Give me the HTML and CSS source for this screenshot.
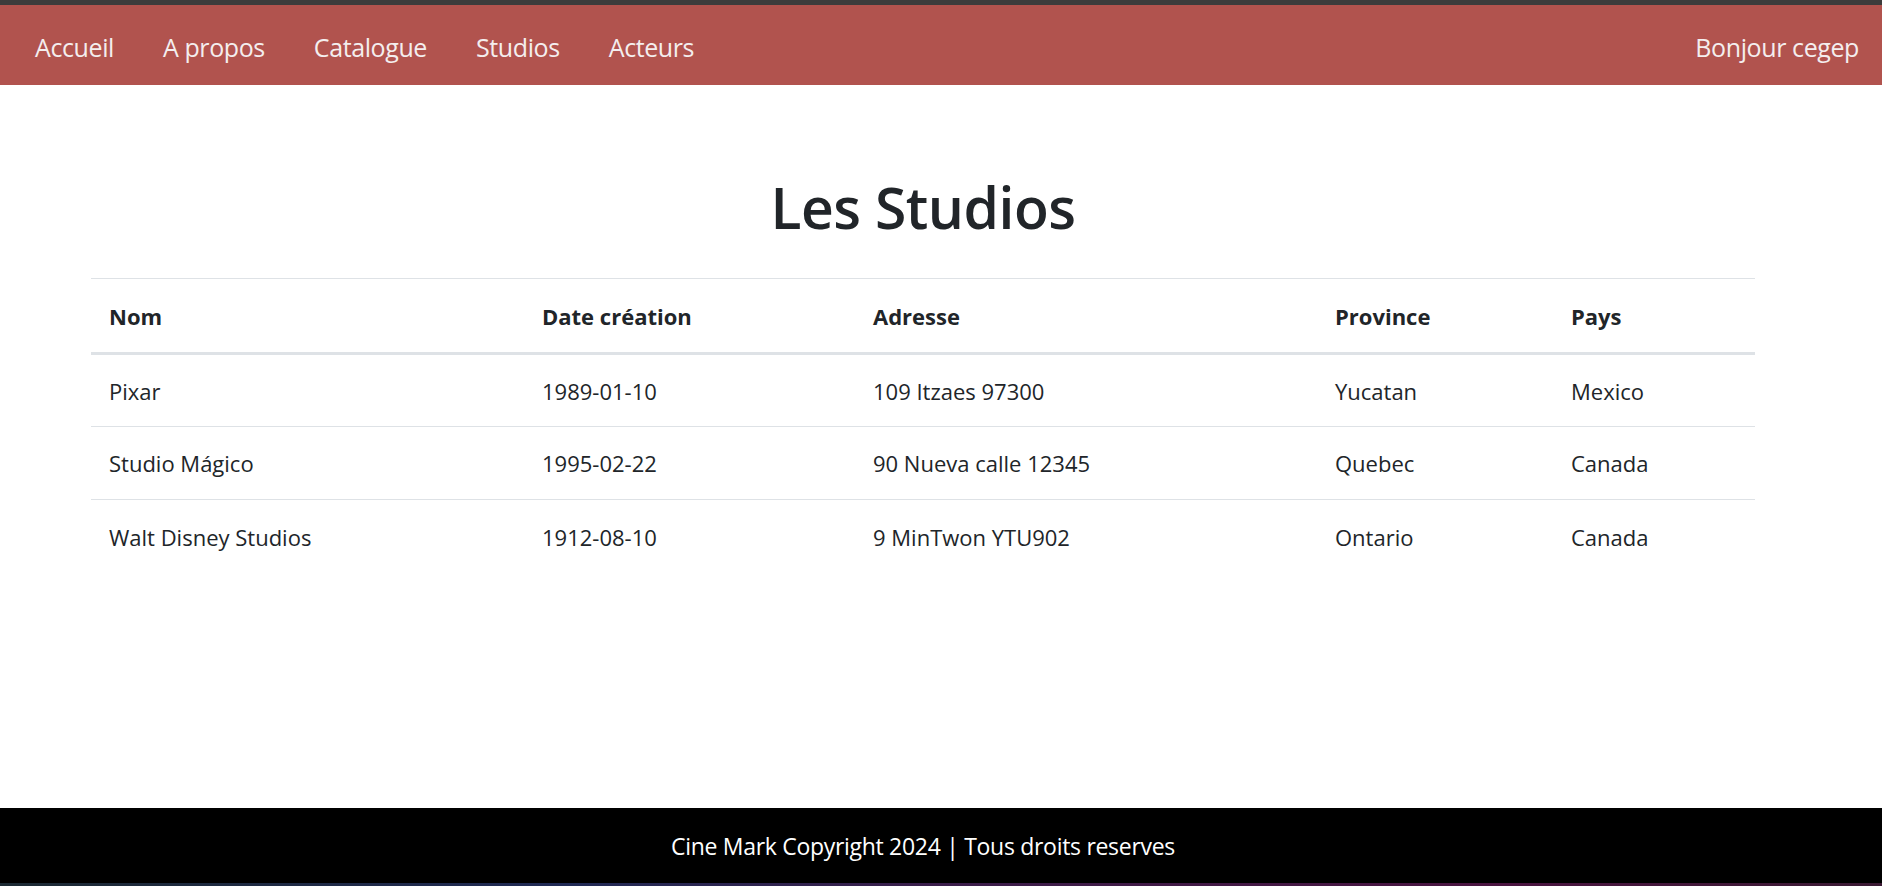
FILE: index.html
```html
<!DOCTYPE html>
<html lang="fr">
<head>
<meta charset="utf-8">
<title>Les Studios</title>
<link rel="stylesheet" href="styles.css">
</head>
<body>
<div class="topbar"></div>
<nav class="navbar">
  <ul class="nav-links">
    <li><a href="#">Accueil</a></li>
    <li><a href="#">A propos</a></li>
    <li><a href="#">Catalogue</a></li>
    <li><a href="#">Studios</a></li>
    <li><a href="#">Acteurs</a></li>
  </ul>
  <span class="greeting">Bonjour cegep</span>
</nav>
<main class="content">
  <h1 class="title">Les Studios</h1>
  <table class="studios">
    <colgroup>
      <col class="c1"><col class="c2"><col class="c3"><col class="c4"><col class="c5">
    </colgroup>
    <thead>
      <tr><th>Nom</th><th>Date création</th><th>Adresse</th><th>Province</th><th>Pays</th></tr>
    </thead>
    <tbody>
      <tr><td>Pixar</td><td>1989-01-10</td><td>109 Itzaes 97300</td><td>Yucatan</td><td>Mexico</td></tr>
      <tr><td>Studio Mágico</td><td>1995-02-22</td><td>90 Nueva calle 12345</td><td>Quebec</td><td>Canada</td></tr>
      <tr><td>Walt Disney Studios</td><td>1912-08-10</td><td>9 MinTwon YTU902</td><td>Ontario</td><td>Canada</td></tr>
    </tbody>
  </table>
</main>
<footer class="footer">
  <p class="footer-text">Cine Mark Copyright 2024 | Tous droits reserves</p>
</footer>
<div class="bottomstrip"></div>
</body>
</html>
```
FILE: styles.css
```css
* { box-sizing: border-box; }
html, body { margin: 0; padding: 0; }
body {
  height: 886px;
  display: flex;
  flex-direction: column;
  font-family: "Open Sans", "Noto Sans", sans-serif;
  color: #212529;
  background: #fff;
  overflow: hidden;
}
.topbar { height: 5px; background: #3c3c3c; flex: none; }
.navbar {
  flex: none;
  height: 80px;
  background: #b1534e;
  display: flex;
  align-items: center;
  justify-content: space-between;
  padding: 3px 23px 0 35px;
}
.nav-links {
  list-style: none;
  margin: 0;
  padding: 0;
  display: flex;
  gap: 49px;
}
.nav-links a, .greeting {
  color: #f4eeee;
  text-decoration: none;
  font-size: 25px;
  letter-spacing: -0.4px;
}
.content {
  flex: 1;
  padding: 88px 127px 0 91px;
}
.title {
  margin: 0 0 37px;
  text-align: center;
  font-size: 57px;
  font-weight: 600;
  line-height: 1.2;
  letter-spacing: -0.5px;
}
.studios {
  width: 100%;
  border-collapse: collapse;
  font-size: 22px;
  border-top: 1px solid #dee2e6;
}
.c1 { width: 433px; }
.c2 { width: 331px; }
.c3 { width: 462px; }
.c4 { width: 236px; }
.c5 { width: 202px; }
.studios th, .studios td {
  text-align: left;
  padding: 0 18px;
  height: 73px;
  vertical-align: middle;
}
.studios th {
  font-weight: 700;
  border-bottom: 3px solid #dee2e6;
  height: 75px;
}
.studios tbody tr + tr td { border-top: 1px solid #dee2e6; }
.footer {
  flex: none;
  height: 75px;
  background: #000;
  display: flex;
  align-items: center;
  padding-right: 36px;
  justify-content: center;
}
.footer-text {
  margin: 0;
  color: #fff;
  font-size: 23px;
  letter-spacing: -0.3px;
}
.bottomstrip {
  flex: none;
  height: 3px;
  background: linear-gradient(90deg, #1c2a33 0%, #202a55 30%, #3a1d4a 50%, #4a1440 80%, #3a1a33 100%);
}
```
